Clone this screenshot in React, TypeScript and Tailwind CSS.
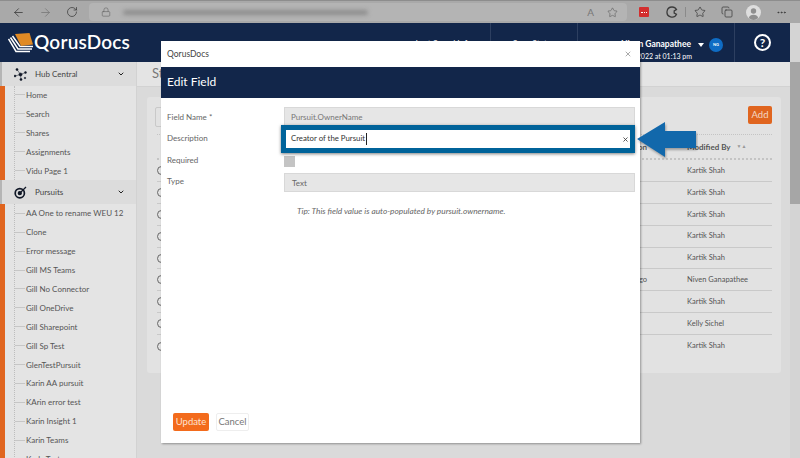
import { ArrowLeft, ArrowRight, RotateCw, Lock, ChevronDown, X, Star, Ellipsis, Copy } from 'lucide-react';

const hubItems = ['Home', 'Search', 'Shares', 'Assignments', 'Vidu Page 1'];
const pursuitItems = [
  'AA One to rename WEU 12',
  'Clone',
  'Error message',
  'Gill MS Teams',
  'Gill No Connector',
  'Gill OneDrive',
  'Gill Sharepoint',
  'Gill Sp Test',
  'GlenTestPursuit',
  'Karin AA pursuit',
  'KArin error test',
  'Karin Insight 1',
  'Karin Teams',
  'Karla Test',
];
const rows = [
  { place: '', by: 'Kartik Shah' },
  { place: '', by: 'Kartik Shah' },
  { place: '', by: 'Kartik Shah' },
  { place: '', by: 'Kartik Shah' },
  { place: '', by: 'Kartik Shah' },
  { place: 'Santiago', by: 'Niven Ganapathee' },
  { place: '', by: 'Kartik Shah' },
  { place: '', by: 'Kelly Sichel' },
  { place: '', by: 'Kartik Shah' },
];

function BrowserBar() {
  return (
    <div className="h-[23px] shrink-0 bg-[#a9a9a9] border-t border-[#8d8d8d] flex items-center text-[#3c3c3c]">
      <div className="w-[89px] flex items-center pl-[12px] gap-[14px]">
        <ArrowLeft size={13} strokeWidth={1.5} />
        <ArrowRight size={13} strokeWidth={1.5} className="text-[#777]" />
        <RotateCw size={12} strokeWidth={1.5} />
      </div>
      <div className="w-[538px] h-[18px] bg-[#b4b4b4] rounded-[4px] flex items-center pl-[12px] pr-[9px]">
        <Lock size={10} strokeWidth={1.5} className="text-[#666] shrink-0" />
        <div className="ml-[12px] h-[5px] w-[245px] bg-[#8c8c8c] rounded-full blur-[2px]" />
        <span className="ml-auto text-[10px] text-[#777]">A</span>
        <Star size={11} strokeWidth={1.5} className="ml-[13px] text-[#666]" />
      </div>
      <div className="flex-1 flex items-center pl-[12px]">
        <div className="w-[10px] h-[10px] bg-[#d32f2f] rounded-[1px] flex items-center justify-center">
          <div className="w-[6px] h-[1px] border-t border-dotted border-white" />
        </div>
        <svg className="ml-[17px]" width="12" height="12" viewBox="0 0 12 12" fill="none" stroke="#3c3c3c" strokeWidth="1.3">
          <path d="M6 1 A5 5 0 1 0 10.5 8.2 L8.2 7 L8.2 4.8 L10.5 3.6 A5 5 0 0 0 6 1 Z" />
        </svg>
        <div className="ml-[7px] w-px h-[10px] bg-[#8a8a8a]" />
        <Star size={12} strokeWidth={1.5} className="ml-[8px]" />
        <Copy size={12} strokeWidth={1.5} className="ml-[15px]" />
        <svg className="ml-[13px]" width="15" height="15" viewBox="0 0 15 15">
          <circle cx="7.5" cy="7.5" r="7.5" fill="#dedede" />
          <circle cx="7.5" cy="6" r="2.7" fill="#8f8f8f" />
          <path d="M2.8 13 A4.9 4.6 0 0 1 12.2 13 A7.5 7.5 0 0 1 2.8 13 Z" fill="#8f8f8f" />
        </svg>
        <Ellipsis size={11} className="ml-[15px]" />
      </div>
    </div>
  );
}

function Logo() {
  return (
    <div className="h-full flex items-center pl-[8px]">
      <svg width="26" height="21" viewBox="0 0 26 21">
        <path d="M0.5 7 L8 19.5 L22 19.5" fill="none" stroke="#fff" strokeWidth="1.5" />
        <path d="M2.5 5.5 L10 17 L24 17" fill="none" stroke="#fff" strokeWidth="1.5" />
        <path d="M4.5 4 L12 14.5 L25 14.5" fill="none" stroke="#fff" strokeWidth="1.5" />
        <path d="M7 2 L21.5 1 L25 12.5 L13 14 Z" fill="#e08a25" />
      </svg>
      <span className="text-white text-[19px] font-semibold tracking-[0.2px]">QorusDocs</span>
    </div>
  );
}

function Header() {
  return (
    <div className="h-[39px] shrink-0 flex bg-[#12264a] text-white">
      <div className="w-[491px] border-r border-[#2d3f60] flex justify-between pr-[18px]">
        <Logo />
        <span className="mt-[17px] text-[8.5px] leading-none">Last Saved Info</span>
      </div>
      <div className="w-[87px] border-r border-[#2d3f60] flex justify-center">
        <span className="mt-[17px] text-[8.5px] leading-none">Save Status</span>
      </div>
      <div className="w-[157px] border-r border-[#2d3f60] relative">
        <div className="absolute right-[43px] top-[17px] text-[8.5px] font-bold leading-none whitespace-nowrap">Niven Ganapathee</div>
        <div className="absolute right-[42px] top-[30px] text-[7px] leading-none whitespace-nowrap">Jun 20, 2022 at 01:13 pm</div>
        <div className="absolute left-[120px] top-[20px] w-0 h-0 border-x-[3px] border-x-transparent border-t-[4px] border-t-white" />
        <div className="absolute left-[131px] top-[15px] w-[14px] h-[14px] rounded-full bg-[#0f6cc4] flex items-center justify-center text-[4px] font-bold">NG</div>
      </div>
      <div className="w-[55px] flex items-center justify-center">
        <div className="w-[17px] h-[17px] rounded-full border-2 border-white flex items-center justify-center text-[12px] font-bold leading-none">?</div>
      </div>
    </div>
  );
}

function NavIcon({ kind }: { kind: 'hub' | 'target' }) {
  if (kind === 'hub') {
    return (
      <svg width="13" height="13" viewBox="0 0 13 13" fill="#111827" stroke="#111827" strokeWidth="0.5">
        <path d="M6.5 6.5 L3 1.5 M6.5 6.5 L11.5 4.5 M6.5 6.5 L1 8 M6.5 6.5 L7 11.5" />
        <circle cx="6.5" cy="6.5" r="1.6" />
        <circle cx="3" cy="1.5" r="1.1" />
        <circle cx="11.5" cy="4.5" r="1" />
        <circle cx="1" cy="8" r="1" />
        <circle cx="7" cy="11.5" r="1.1" />
        <circle cx="11" cy="10" r="0.8" />
      </svg>
    );
  }
  return (
    <svg width="13" height="13" viewBox="0 0 13 13" fill="none" stroke="#111827" strokeWidth="1.7">
      <circle cx="5.8" cy="7.2" r="4.6" />
      <circle cx="5.8" cy="7.2" r="1.3" fill="#111827" />
      <path d="M6.5 6.5 L12 1" strokeWidth="1.2" />
    </svg>
  );
}

function NavGroup({ label, kind, items }: { label: string; kind: 'hub' | 'target'; items: string[] }) {
  return (
    <div>
      <div className="h-[24px] bg-[#dcdcdc] flex items-center pl-[12px] pr-[11px] border-l-2 border-[#b5b5b5]">
        <NavIcon kind={kind} />
        <span className="ml-[8px] text-[8px] text-[#444]">{label}</span>
        <ChevronDown size={8} strokeWidth={3} className="ml-auto text-[#222]" />
      </div>
      <div className="border-l-[5px] border-[#e0651f] pl-[9px]">
        <div className="border-l border-dotted border-[#bdbdbd]">
          {items.map(item => (
            <div key={item} className="h-[18.9px] pb-px flex items-center whitespace-nowrap">
              <div className="w-[10px] h-px bg-[#c6c6c6] mr-px" />
              <span className="text-[8px] text-[#555]">{item}</span>
            </div>
          ))}
        </div>
      </div>
    </div>
  );
}

function Card() {
  return (
    <div className="ml-[10px] mr-[9px] mt-[10px] h-[276px] bg-[#e2e2e2] rounded-[3px] pl-[10px] pr-[9px] pt-[9px]">
      <div className="h-[18px] flex justify-between items-start">
        <div className="w-[20px] h-[20px] ml-[-2px] mt-px border border-[#c9c9c9] rounded-[2px]" />
        <button className="w-[24px] h-[18px] bg-[#e0651f] rounded-[2px] text-[#f3d9c6] text-[9.5px]">Add</button>
      </div>
      <div className="mt-[10px] h-[26px] border-t border-dotted border-[#c4c4c4] border-b-2 border-b-[#c4c4c4] flex items-center">
        <span className="w-[490px] text-right text-[8px] font-bold text-[#555]">Description</span>
        <span className="ml-[40px] text-[8px] font-bold text-[#555]">Modified By</span>
        <span className="ml-[6px] text-[5px] text-[#999]">▼▲</span>
      </div>
      {rows.map((row, i) => (
        <div key={i} className="h-[21.9px] border-b border-[#c9c9c9] flex items-center last:border-b-0">
          <div className="w-[9px] h-[9px] shrink-0 rounded-full border border-[#666]" />
          <span className="w-[481px] text-right text-[7.5px] text-[#555]">{row.place}</span>
          <span className="ml-[40px] text-[7.5px] text-[#555] whitespace-nowrap">{row.by}</span>
        </div>
      ))}
    </div>
  );
}

function Field({ label, labelClass, children }: { label: string; labelClass?: string; children: React.ReactNode }) {
  return (
    <div className="flex items-center">
      <div className={`w-[117px] text-[8px] leading-[11px] text-[#666] ${labelClass ?? ''}`}>{label}</div>
      <div className="w-[351px]">{children}</div>
    </div>
  );
}

function Modal() {
  return (
    <div className="absolute left-[161px] top-[41px] w-[479px] h-[402px] bg-white shadow-[1px_1px_2px_rgba(0,0,0,0.35)] flex flex-col">
      <div className="h-[25px] shrink-0 flex items-center pl-[6px] pr-[8px]">
        <span className="mt-px text-[8.5px] text-[#444]">QorusDocs</span>
        <X size={8} strokeWidth={1.5} className="ml-auto text-[#555]" />
      </div>
      <div className="h-[31px] shrink-0 mt-px pb-px bg-[#12264a] flex items-center pl-[6px]">
        <span className="text-[12px] text-white">Edit Field</span>
      </div>
      <div className="flex-1 pl-[6px] pt-[9px] flex flex-col">
        <Field label="Field Name *">
          <div className="h-[20px] bg-[#e6e6e6] border border-[#d8d8d8] flex items-center pl-[6px] text-[8px] text-[#777]">
            Pursuit.OwnerName
          </div>
        </Field>
        <div className="mt-[3px]">
          <Field label="Description" labelClass="-mt-[2px]">
            <div className="relative h-[18px] flex items-center pl-[7px] text-[7.8px] text-[#333]">
              <div className="absolute left-[-3px] right-0 top-[-5px] bottom-[-5px] border-[5px] border-[#00639a] shadow-[0_1px_3px_rgba(0,0,0,0.5)]" />
              <span className="relative border-r border-[#222] pr-px">Creator of the Pursuit</span>
              <X size={7} strokeWidth={3} className="absolute right-[6px] text-[#444]" />
            </div>
          </Field>
        </div>
        <div className="mt-[8px]">
          <Field label="Required" labelClass="-mt-[2px]">
            <div className="w-[11px] h-[11px] bg-[#c4c4c4]" />
          </Field>
        </div>
        <div className="mt-[6px]">
          <Field label="Type" labelClass="-mt-[2px]">
            <div className="h-[19px] bg-[#e6e6e6] border border-[#d8d8d8] flex items-center pl-[7px] text-[8px] text-[#666]">
              Text
            </div>
          </Field>
        </div>
        <div className="mt-[13px] pl-[130px] text-[8.3px] leading-[12px] italic text-[#666]">
          Tip: This field value is auto-populated by pursuit.ownername.
        </div>
        <div className="mt-auto mb-[12px] flex gap-[7px] pl-[6px]">
          <button className="w-[36px] h-[18px] bg-[#f36b1c] rounded-[2px] text-[9.5px] text-[#fde3d2]">Update</button>
          <button className="w-[33px] h-[18px] bg-white border border-[#eeeeee] rounded-[2px] text-[9.5px] text-[#777]">Cancel</button>
        </div>
      </div>
    </div>
  );
}

function Arrow() {
  return (
    <svg className="absolute left-[636px] top-[120px]" width="62" height="42" viewBox="0 0 62 42">
      <path d="M1 19 L29 2 L29 11 L60 11 L60 28 L29 28 L29 37 Z" fill="#1268ab" style={{ filter: 'drop-shadow(1px 2px 1px rgba(0,0,0,0.3))' }} />
    </svg>
  );
}

export default function App() {
  return (
    <div className="relative w-[800px] h-[458px] overflow-hidden flex flex-col bg-[#dadada] font-['Lato',sans-serif]">
      <BrowserBar />
      <div className="flex flex-1 min-h-0">
        <div className="flex-1 flex flex-col min-w-0">
          <Header />
          <div className="flex flex-1 min-h-0">
            <div className="w-[137px] shrink-0 bg-[#e4e4e4] border-r border-[#d2d2d2] overflow-hidden">
              <NavGroup label="Hub Central" kind="hub" items={hubItems} />
              <NavGroup label="Pursuits" kind="target" items={pursuitItems} />
            </div>
            <div className="flex-1 min-w-0">
              <div className="h-[25px] bg-[#e4e4e4] border-b border-[#d2d2d2] flex items-center pl-[15px] text-[13px] text-[#777]">
                Standard Fields
              </div>
              <Card />
            </div>
          </div>
        </div>
        <div className="w-[10px] shrink-0 bg-[#d4d4d4]">
          <div className="h-[142px] mt-[39px] bg-[#a6a6a6]" />
        </div>
      </div>
      <Modal />
      <Arrow />
    </div>
  );
}
